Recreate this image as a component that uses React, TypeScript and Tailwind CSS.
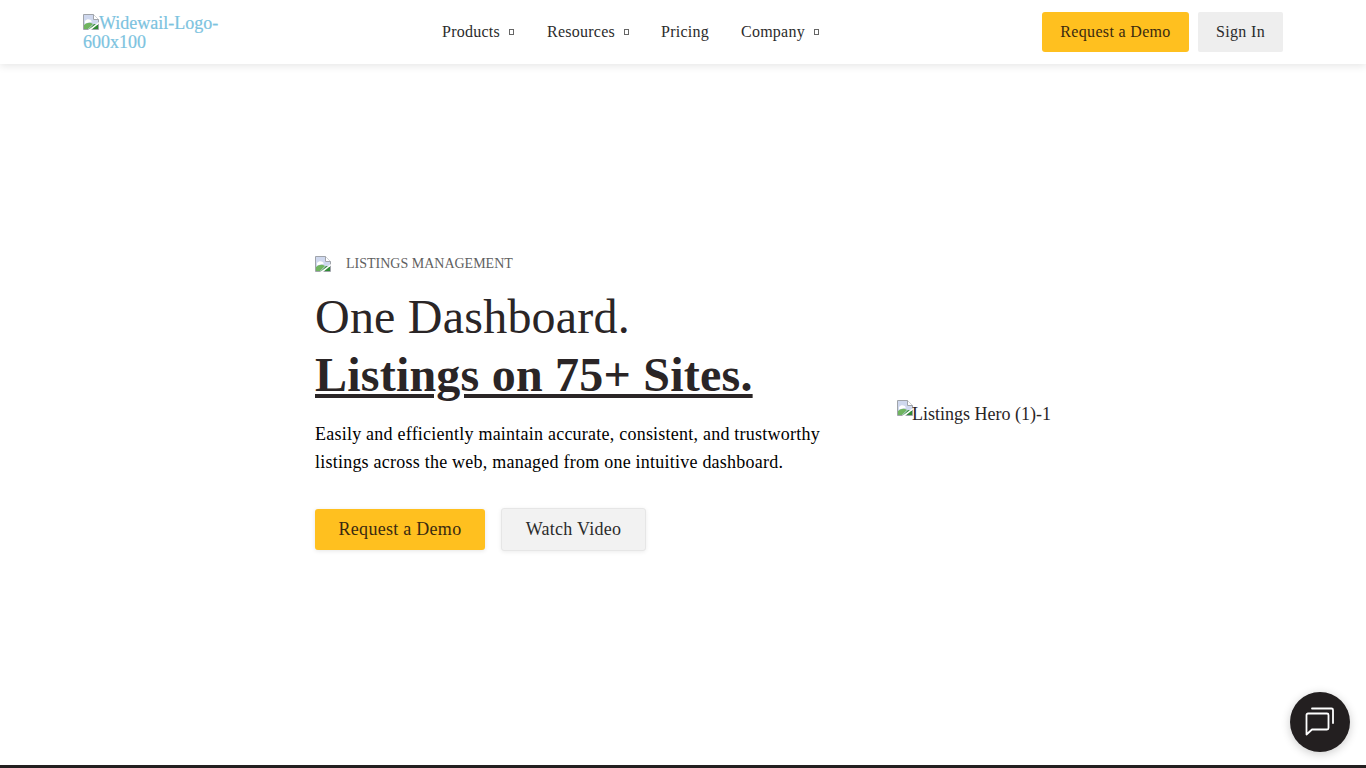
import React from 'react';

const BrokenImage: React.FC<{ className?: string }> = ({ className }) => (
  <svg viewBox="0 0 16 16" width="16" height="16" className={className}>
    <path d="M0.5 0.5H10.5L15.5 5.5V15.5H0.5Z" fill="#cfd8ee" stroke="#a0a4aa" />
    <path d="M10.5 0.5V5.5H15.5" fill="#fff" stroke="#a0a4aa" />
    <path d="M2 7C4 4.5 7 4.5 9 7.5L2 9.5Z" fill="#fff" />
    <path d="M1 15V11C4 8.5 7 8 10 10L5 15Z" fill="#6fb45f" />
    <path d="M6 15L11 10L15 11V15Z" fill="#2f8a34" />
    <path d="M5 16L16 8V9.5L8 16Z" fill="#fff" />
  </svg>
);

const Tofu = () => <span className="ml-[9px] inline-block h-[6px] w-[5px] border border-[#666] align-[3px]" />;

const NavItem: React.FC<{ label: string; caret?: boolean; className?: string }> = ({ label, caret, className }) => (
  <a className={`flex items-center whitespace-nowrap text-[#2b2b2b] ${className ?? ''}`}>
    {label}
    {caret && <Tofu />}
  </a>
);

export default function App() {
  return (
    <div className="flex h-[768px] flex-col overflow-hidden bg-white font-['Liberation_Serif',serif] text-[#2a2526]">
      <header className="relative z-10 flex h-[64px] shrink-0 items-center justify-between bg-white pl-[83px] pr-[83px] shadow-[0_2px_8px_rgba(0,0,0,0.1)]">
        <a className="mt-[2px] w-[150px] text-[18px] font-normal leading-[19px] text-[#7cc3e0] [-webkit-text-stroke:0.2px_#7cc3e0]">
          <BrokenImage className="inline-block align-[-1px]" />
          Widewail-Logo-600x100
        </a>
        <nav className="ml-[-14px] flex items-center gap-[32px] text-[16px] tracking-[0.25px]">
          <NavItem label="Products" caret className="mr-[1px]" />
          <NavItem label="Resources" caret />
          <NavItem label="Pricing" />
          <NavItem label="Company" caret />
        </nav>
        <div className="flex items-center gap-[9px] text-[16px] tracking-[0.33px]">
          <a className="flex h-[40px] w-[147px] items-center justify-center rounded-[3px] bg-[#ffc01f] text-[#3a2a10]">Request a Demo</a>
          <a className="flex h-[40px] w-[85px] items-center justify-center rounded-[2px] bg-[#eeeeee] text-[#2b2b2b]">Sign In</a>
        </div>
      </header>

      <main className="flex flex-1 items-center pl-[315px]">
        <div className="mt-[-26px] flex w-[582px] flex-col items-start">
          <div className="mt-[1px] flex h-[20px] items-center text-[14px] text-[#5f5f5f]">
            <BrokenImage className="mr-[15px]" />
            LISTINGS MANAGEMENT
          </div>
          <h1 className="mt-[14px] text-[48px] font-normal leading-[58px] tracking-[0.22px]">
            One Dashboard.
            <br />
            <strong className="font-bold underline decoration-[4px] underline-offset-[3px]">Listings on 75+ Sites.</strong>
          </h1>
          <p className="mt-[16px] w-[530px] text-[18px] leading-[28px] tracking-[0.23px] text-black">
            Easily and efficiently maintain accurate, consistent, and trustworthy listings across the web, managed from one intuitive dashboard.
          </p>
          <div className="mt-[32px] flex items-center gap-[16px] text-[18px] tracking-[0.28px]">
            <a className="flex h-[41px] w-[170px] items-center justify-center rounded-[3px] bg-[#ffc01f] text-[#3a2a10] shadow-[0_1px_4px_rgba(0,0,0,0.1)]">Request a Demo</a>
            <a className="flex h-[43px] w-[145px] items-center justify-center rounded-[3px] border border-[#e6e6e6] bg-[#f2f2f2] text-[#2b2b2b] shadow-[0_1px_4px_rgba(0,0,0,0.08)]">Watch Video</a>
          </div>
        </div>
        <div className="mt-[-4px] flex items-start text-[18px] leading-[21px]">
          <BrokenImage />
          <span className="ml-[-1px] pt-[4px]">Listings Hero (1)-1</span>
        </div>
      </main>

      <div className="h-[3px] shrink-0 bg-[#231f20]" />

      <button className="fixed bottom-[16px] right-[16px] flex h-[60px] w-[60px] items-center justify-center rounded-full bg-[#231f20] shadow-[0_2px_10px_rgba(0,0,0,0.2)]">
        <svg viewBox="0 0 32 32" width="32" height="32" fill="none" stroke="#fff" strokeWidth="1.8" strokeLinejoin="round" strokeLinecap="round">
          <path d="M8 2.5H27.5a1.5 1.5 0 0 1 1.5 1.5V17" />
          <path d="M4 7.5H23a1.5 1.5 0 0 1 1.5 1.5V22a1.5 1.5 0 0 1-1.5 1.5H8L2.5 28.5V9a1.5 1.5 0 0 1 1.5-1.5Z" />
        </svg>
      </button>
    </div>
  );
}
